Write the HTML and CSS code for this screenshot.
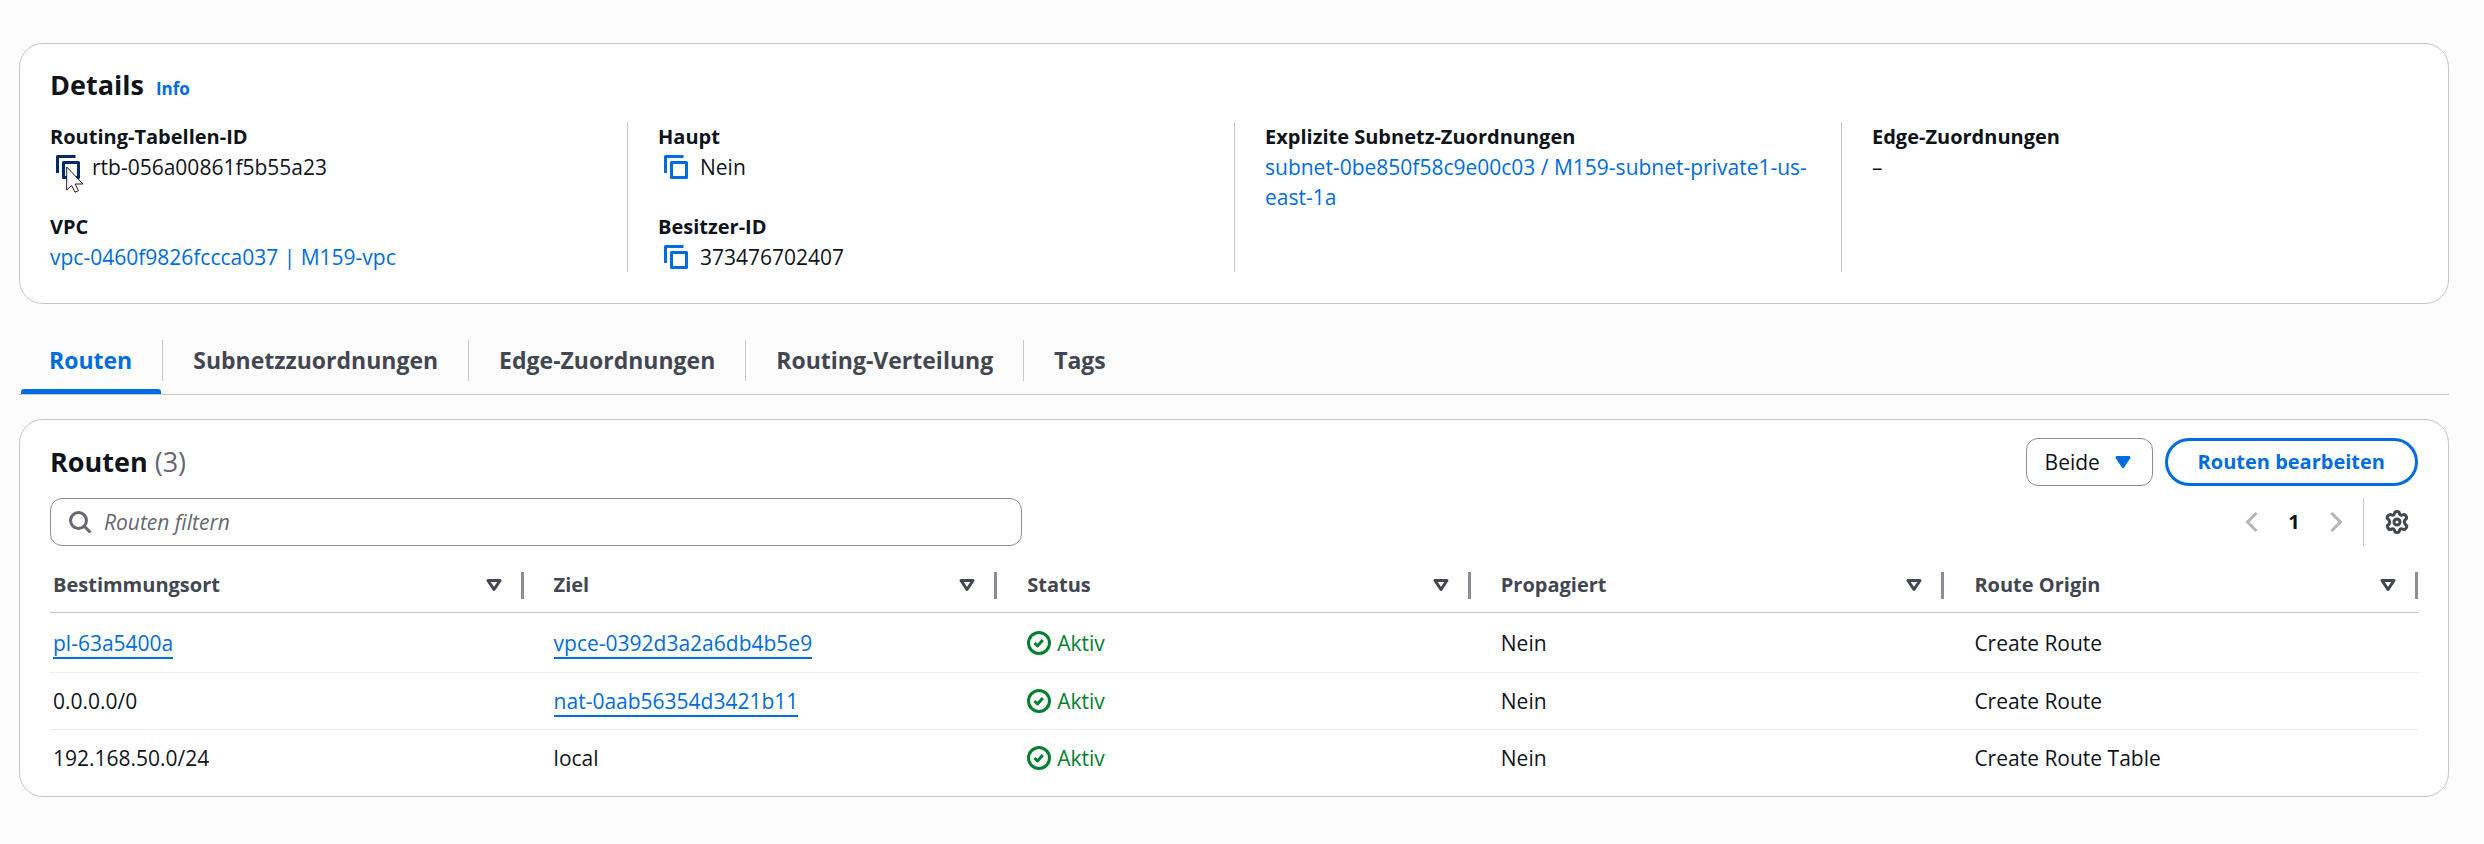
FILE: index.html
```html
<!DOCTYPE html>
<html lang="de">
<head>
<meta charset="utf-8">
<meta name="viewport" content="width=device-width, initial-scale=1">
<title>Routing-Tabelle</title>
<link rel="stylesheet" href="styles.css">
</head>
<body>
<svg class="sprite" aria-hidden="true">
  <symbol id="copy" viewBox="0 0 16 16"><path d="M15 5H5v10h10V5Z"/><path d="M13 1H1v11"/></symbol>
  <symbol id="sort" viewBox="0 0 16 16"><path d="M8 11 4 5h8l-4 6Z"/></symbol>
  <symbol id="ok" viewBox="0 0 16 16"><circle cx="8" cy="8" r="7"/><path d="m5 8 2 2 3.521-4"/></symbol>
</svg>
<main class="page">
  <section class="card details">
    <header class="details-header">
      <h2 class="title">Details</h2>
      <a class="info" href="#info">Info</a>
    </header>
    <div class="columns">
      <dl class="column">
        <div>
          <dt>Routing-Tabellen-ID</dt>
          <dd class="copy-value">
            <button class="copy hovered" type="button" aria-label="Routing-Tabellen-ID kopieren"><svg class="icon"><use href="#copy"/></svg>
              <svg class="cursor" viewBox="0 0 18 27" aria-hidden="true"><path d="M.7 1v23l4.900-4.500 3.400 6.700 3.400-1.500-3.200-6.700h7.800Z"/></svg>
            </button>
            <span>rtb-056a00861f5b55a23</span>
          </dd>
        </div>
        <div>
          <dt>VPC</dt>
          <dd><a href="#vpc">vpc-0460f9826fccca037 | M159-vpc</a></dd>
        </div>
      </dl>
      <dl class="column">
        <div>
          <dt>Haupt</dt>
          <dd class="copy-value"><button class="copy" type="button" aria-label="Haupt kopieren"><svg class="icon"><use href="#copy"/></svg></button><span>Nein</span></dd>
        </div>
        <div>
          <dt>Besitzer-ID</dt>
          <dd class="copy-value"><button class="copy" type="button" aria-label="Besitzer-ID kopieren"><svg class="icon"><use href="#copy"/></svg></button><span>373476702407</span></dd>
        </div>
      </dl>
      <dl class="column">
        <div>
          <dt>Explizite Subnetz-Zuordnungen</dt>
          <dd><a href="#subnet">subnet-0be850f58c9e00c03 / M159-subnet-private1-us-east-1a</a></dd>
        </div>
      </dl>
      <dl class="column">
        <div>
          <dt>Edge-Zuordnungen</dt>
          <dd>–</dd>
        </div>
      </dl>
    </div>
  </section>

  <div class="tabs" role="tablist">
    <div class="tab active"><button type="button" role="tab" aria-selected="true">Routen</button></div>
    <div class="tab"><button type="button" role="tab" aria-selected="false">Subnetzzuordnungen</button></div>
    <div class="tab"><button type="button" role="tab" aria-selected="false">Edge-Zuordnungen</button></div>
    <div class="tab"><button type="button" role="tab" aria-selected="false">Routing-Verteilung</button></div>
    <div class="tab"><button type="button" role="tab" aria-selected="false">Tags</button></div>
  </div>

  <section class="card routes">
    <header class="bar">
      <h2 class="title">Routen <span class="count">(3)</span></h2>
      <div class="actions">
        <div class="select">
          <select aria-label="Routen anzeigen"><option>Beide</option></select>
          <svg class="icon caret" aria-hidden="true"><use href="#sort"/></svg>
        </div>
        <button class="edit" type="button">Routen bearbeiten</button>
      </div>
    </header>
    <div class="bar">
      <label class="search">
        <svg class="icon" viewBox="0 0 16 16" aria-hidden="true"><circle cx="7" cy="7" r="5.3"/><path d="m15 15-4.500-4.500"/></svg>
        <input type="text" placeholder="Routen filtern" aria-label="Routen filtern">
      </label>
      <div class="tools">
        <nav class="pages" aria-label="Seiten">
          <button type="button" class="step" disabled aria-label="Vorherige Seite"><svg class="icon" viewBox="0 0 16 16"><path d="M11 2 5 8l6 6"/></svg></button>
          <button type="button" class="current">1</button>
          <button type="button" class="step" disabled aria-label="Nächste Seite"><svg class="icon" viewBox="0 0 16 16"><path d="m5 2 6 6-6 6"/></svg></button>
        </nav>
        <button type="button" class="settings" aria-label="Einstellungen">
          <svg class="icon" viewBox="0 0 24 24"><circle cx="12" cy="12" r="3"/><path d="M9.6 3.4Q9.8 1.5 12 1.5T14.4 3.4Q15 5.6 17.2 5.1 19.6 3.7 20.8 5.6T21.3 8.8Q19 10 19.300 12T21.300 15.200Q22.500 16.500 20.800 18.400T17.200 18.900Q15 18.400 14.400 20.600 14.200 22.500 12 22.500T9.600 20.600Q9 18.400 6.800 18.900 4.400 20.300 3.200 18.400T2.700 15.200Q5 14 4.700 12T2.700 8.800Q1.500 7.500 3.200 5.600T6.800 5.100Q9 5.600 9.600 3.400Z"/></svg>
        </button>
      </div>
    </div>
    <table class="table">
      <thead>
        <tr>
          <th scope="col"><button type="button"><span>Bestimmungsort</span><svg class="icon"><use href="#sort"/></svg></button></th>
          <th scope="col"><button type="button"><span>Ziel</span><svg class="icon"><use href="#sort"/></svg></button></th>
          <th scope="col"><button type="button"><span>Status</span><svg class="icon"><use href="#sort"/></svg></button></th>
          <th scope="col"><button type="button"><span>Propagiert</span><svg class="icon"><use href="#sort"/></svg></button></th>
          <th scope="col"><button type="button"><span>Route Origin</span><svg class="icon"><use href="#sort"/></svg></button></th>
        </tr>
      </thead>
      <tbody>
        <tr>
          <td><a href="#pl">pl-63a5400a</a></td>
          <td><a href="#vpce">vpce-0392d3a2a6db4b5e9</a></td>
          <td><span class="status"><svg class="icon"><use href="#ok"/></svg>Aktiv</span></td>
          <td>Nein</td>
          <td>Create Route</td>
        </tr>
        <tr>
          <td>0.0.0.0/0</td>
          <td><a href="#nat">nat-0aab56354d3421b11</a></td>
          <td><span class="status"><svg class="icon"><use href="#ok"/></svg>Aktiv</span></td>
          <td>Nein</td>
          <td>Create Route</td>
        </tr>
        <tr>
          <td>192.168.50.0/24</td>
          <td>local</td>
          <td><span class="status"><svg class="icon"><use href="#ok"/></svg>Aktiv</span></td>
          <td>Nein</td>
          <td>Create Route Table</td>
        </tr>
      </tbody>
    </table>
  </section>
</main>
</body>
</html>
```
FILE: styles.css
```css
:root {
  --text: #0f141a;
  --muted: #656871;
  --strong: #424650;
  --link: #006ce0;
  --line: #c6c6cd;
  --control: #8c8c94;
  --green: #00802f;
}

* { box-sizing: border-box; }

body {
  margin: 0;
  background: #fcfcfd;
  color: var(--text);
  font: 21px/30px "Open Sans", "Noto Sans", sans-serif;
}

button, input, select { font: inherit; color: inherit; }
button { padding: 0; border: 0; background: none; cursor: pointer; }
a { color: var(--link); text-decoration: none; }

.sprite { position: absolute; width: 0; height: 0; }

.icon {
  display: block;
  flex: none;
  width: 24px;
  height: 24px;
  fill: none;
  stroke: currentColor;
  stroke-width: 2;
  stroke-linejoin: round;
}

.page { padding: 43px 35px 47px 19px; }

.card {
  border: 1px solid var(--line);
  border-radius: 24px;
  background: #fff;
}

.title { margin: 0; font-size: 27px; line-height: 36px; font-weight: 700; }

.details { padding: 23px 0 31px; }
.details-header { display: flex; align-items: baseline; gap: 12px; padding: 0 30px; margin-bottom: 18px; }
.info { font-size: 17px; font-weight: 700; }

.columns { display: grid; grid-template-columns: repeat(4, 1fr); }
.column { display: flex; flex-direction: column; gap: 30px; margin: 0; padding: 0 30px; }
.column + .column { border-left: 1px solid var(--line); }
.column dt { font-size: 20px; font-weight: 700; }
.column dd { margin: 0; }
.copy-value { display: flex; align-items: center; gap: 12px; padding-left: 6px; }
.copy { position: relative; color: var(--link); }
.copy.hovered { color: #002b66; }
.copy .cursor { position: absolute; left: 10px; top: 11px; width: 18px; height: 27px; fill: #fff; stroke: #1b1b2b; stroke-width: 1; }

.tabs { display: flex; padding-top: 24px; border-bottom: 1px solid var(--line); margin-bottom: 24px; }
.tab { position: relative; padding: 12px 0 13px; }
.tab button { padding: 5px 30px 6px; font-size: 23px; font-weight: 700; color: var(--strong); }
.tab + .tab button { border-left: 1px solid var(--line); }
.tab.active button { color: var(--link); }
.tab.active::after {
  content: "";
  position: absolute;
  left: 2px;
  right: 1px;
  bottom: 0;
  height: 5px;
  border-radius: 3px 3px 0 0;
  background: var(--link);
}

.routes { padding: 18px 30px 10px; }
.bar { display: flex; align-items: center; justify-content: space-between; gap: 30px; }
.bar + .bar { margin-top: 12px; }
.count { font-weight: 400; color: var(--muted); }
.actions { display: flex; gap: 12px; }

.select { position: relative; }
.select select {
  appearance: none;
  height: 48px;
  width: 127px;
  padding: 0 48px 0 18px;
  border: 1px solid var(--control);
  border-radius: 12px;
  background: #fff;
}
.caret { position: absolute; right: 18px; top: 12px; color: var(--link); pointer-events: none; }
.select .caret { fill: currentColor; }

.edit {
  height: 48px;
  padding: 0 30px;
  border: 3px solid var(--link);
  border-radius: 24px;
  color: var(--link);
  font-size: 20px;
  font-weight: 700;
}

.search {
  display: flex;
  align-items: center;
  gap: 12px;
  flex: 0 1 972px;
  height: 48px;
  padding: 0 17px;
  border: 1px solid var(--control);
  border-radius: 12px;
  color: var(--muted);
}
.search input { flex: 1; min-width: 0; padding: 0; border: 0; outline: 0; background: none; color: var(--text); }
.search input::placeholder { color: var(--muted); font-style: italic; opacity: 1; }

.tools { display: flex; align-items: center; }
.pages { display: flex; align-items: center; padding-right: 15px; }
.pages .current { width: 60px; font-size: 20px; font-weight: 700; }
.step { color: #b4b4bb; }
.step .icon { stroke-linejoin: miter; }
.settings { display: flex; align-items: center; height: 48px; padding: 0 9px 0 21px; border-left: 1px solid var(--line); color: var(--strong); }
.settings .icon { stroke-width: 3; }

.table { width: 100%; table-layout: fixed; border-collapse: separate; border-spacing: 0; text-align: left; }
.table th { padding: 24px 0 12px; border-bottom: 1px solid var(--line); color: var(--strong); }
.table th button {
  display: flex;
  align-items: center;
  justify-content: space-between;
  width: 100%;
  padding: 0 18px 0 30px;
  font-size: 20px;
  font-weight: 700;
  text-align: left;
  background: linear-gradient(var(--control), var(--control)) right center / 3px 27px no-repeat;
}
.table th:first-child button { padding-left: 3px; }
.table td { padding: 13px 30px; border-bottom: 1px solid #ebebf0; }
.table td:first-child { padding-left: 3px; }
.table tbody tr:first-child td { padding-top: 15px; padding-bottom: 14px; }
.table tbody tr:last-child td { border-bottom: 0; }
.table td a { border-bottom: 2px solid var(--link); }
.status { display: flex; align-items: center; gap: 6px; color: var(--green); }
```
